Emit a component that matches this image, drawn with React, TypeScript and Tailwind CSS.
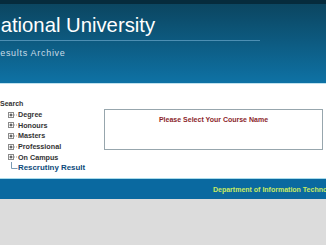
import React from 'react';

const PlusBox = () => (
  <svg width="18" height="10" viewBox="0 0 18 10" className="shrink-0">
    <rect x="8.5" y="2.5" width="5" height="5" fill="#fff" stroke="#8a8a8a" strokeWidth="1" />
    <line x1="9.5" y1="5" x2="12.5" y2="5" stroke="#333" strokeWidth="1" />
    <line x1="11" y1="3.5" x2="11" y2="6.5" stroke="#333" strokeWidth="1" />
    <line x1="14" y1="5" x2="17" y2="5" stroke="#999" strokeWidth="1" strokeDasharray="1 1" />
  </svg>
);

const LastLine = () => (
  <svg width="18" height="11" viewBox="0 0 18 11" className="shrink-0">
    <path d="M11.5 -1 V6.5 H17.5" fill="none" stroke="#7a9bb5" strokeWidth="1" />
  </svg>
);

const App = () => {
  const items = ['Degree', 'Honours', 'Masters', 'Professional', 'On Campus'];

  return (
    <div className="w-full h-[245px] overflow-hidden bg-[#dcdcdc] font-['Liberation_Sans',Arial,sans-serif]">
      {/* header */}
      <div className="h-[4px] bg-[#062b3c]" />
      <div className="h-[79px] bg-gradient-to-b from-[#0b4661] to-[#0e72a5] pt-[11px] overflow-hidden">
        <div className="text-[20.3px] leading-none text-white ml-[-14px] whitespace-nowrap">National University</div>
        <div className="mt-[5px] w-[260px] h-px bg-[#4d8fb3]" />
        <div className="mt-[8px] text-[9px] leading-none tracking-[0.7px] text-[#c9dce7] ml-[-7px] whitespace-nowrap">
          Results Archive
        </div>
      </div>
      <div className="h-px bg-[#bfe2ef]" />

      {/* content */}
      <div className="h-[94px] bg-white flex">
        <div className="w-[104px] pt-[15px] shrink-0">
          <div className="h-[10.6px] leading-[10.6px] text-[7px] font-bold text-[#333]">Search</div>
          {items.map((item) => (
            <div key={item} className="h-[10.6px] flex items-center">
              <PlusBox />
              <span className="text-[7.2px] font-bold text-[#333] leading-none">{item}</span>
            </div>
          ))}
          <div className="h-[10.6px] flex items-center">
            <LastLine />
            <span className="text-[7.9px] font-bold text-[#0c4a7a] leading-none">Rescrutiny Result</span>
          </div>
        </div>
        <div className="mt-[25px] w-[219px] h-[41px] border border-[#97a6ad] pt-[5px] text-center text-[7px] leading-[10px] font-bold text-[#8c1f2c]">
          Please Select Your Course Name
        </div>
      </div>

      {/* footer */}
      <div className="h-px bg-[#a9dcec]" />
      <div className="h-[20px] bg-[#0a69a0] flex items-center pl-[213px] overflow-hidden">
        <span className="text-[7px] font-bold text-[#c8ea62] whitespace-nowrap leading-none">
          Department of Information Technology
        </span>
      </div>
    </div>
  );
};

export default App;
